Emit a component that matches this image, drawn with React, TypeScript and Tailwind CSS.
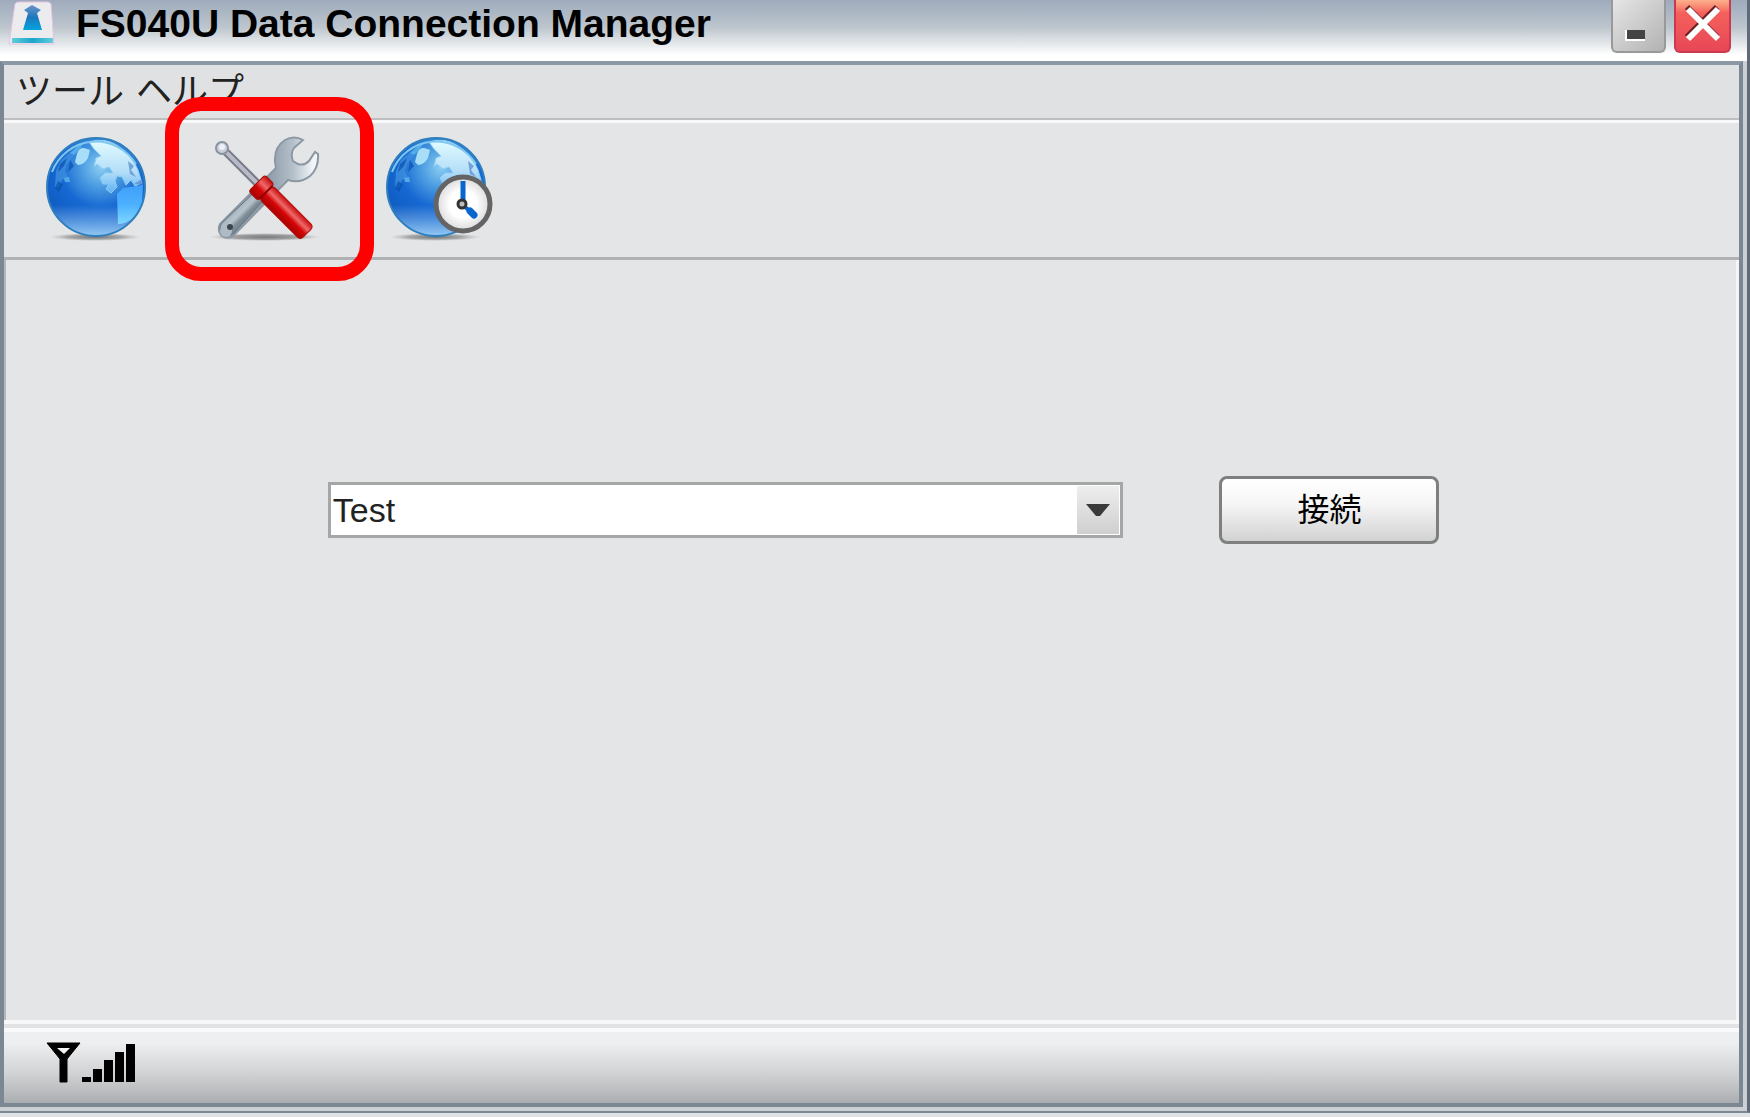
import React from "react";

function GlobeBase({ id }: { id: string }) {
  return (
    <>
      <defs>
        <radialGradient id={`${id}-sea`} cx="0.55" cy="0.3" r="0.75">
          <stop offset="0" stopColor="#8ccdf2" />
          <stop offset="0.25" stopColor="#4f9fe2" />
          <stop offset="0.55" stopColor="#1668d2" />
          <stop offset="1" stopColor="#0b57bd" />
        </radialGradient>
        <linearGradient id={`${id}-glow`} x1="0" y1="0" x2="0" y2="1">
          <stop offset="0.68" stopColor="#9cc8f5" stopOpacity="0" />
          <stop offset="1" stopColor="#9cd0f8" stopOpacity="0.95" />
        </linearGradient>
        <linearGradient id={`${id}-land`} x1="0" y1="0" x2="0" y2="1">
          <stop offset="0" stopColor="#e2fbff" />
          <stop offset="0.6" stopColor="#b4def8" />
          <stop offset="1" stopColor="#5db2f5" />
        </linearGradient>
        <linearGradient id={`${id}-south`} x1="0" y1="0" x2="0" y2="1">
          <stop offset="0" stopColor="#3f9ffa" />
          <stop offset="0.5" stopColor="#4cb0ff" />
          <stop offset="1" stopColor="#80d8ff" />
        </linearGradient>
        <radialGradient id={`${id}-shadow`}>
          <stop offset="0" stopColor="#6d6f71" />
          <stop offset="0.6" stopColor="#8d8f91" stopOpacity="0.7" />
          <stop offset="1" stopColor="#b0b2b4" stopOpacity="0" />
        </radialGradient>
      </defs>
      <ellipse cx="59" cy="107" rx="46" ry="4" fill={`url(#${id}-shadow)`} />
      <circle cx="60" cy="57" r="49" fill={`url(#${id}-sea)`} />
      <circle cx="60" cy="57" r="49" fill={`url(#${id}-glow)`} />
      <path
        d="M53 12 Q69 7 82 16 Q96 25 102 40 L106 53 L99 56 L95 50 L90 55 L86 47 L81 46 L79 51 L81 57 L75 63 L70 59 L73 54 L67 54 L64 48 L69 43 L77 43 L73 37 L67 39 L61 34 L58 37 L60 28 L65 26 L58 19 Z"
        fill={`url(#${id}-land)`}
        stroke="#8fcdf3"
        strokeWidth="1"
        strokeLinejoin="round"
      />
      <path d="M41 24 Q43 17 48 18 L54 20 L52 28 Q48 35 42 35 L39 32 Z" fill="#a8def8" />
      <path d="M20 41 L25 30 L35 22 L38 26 L31 34 L29 41 L32 47 L26 50 L23 58 L19 57 Z" fill="#3c8fdd" opacity="0.8" />
      <path d="M28 48 L33 47 L34 52 L29 52 Z M34 23 L42 16 L47 14 L44 19 L38 25 Z" fill="#5bb4ea" opacity="0.85" />
      <path d="M24 34 L31 28 L28 36 L22 42 Z M22 51 L27 54 L23 62 L19 58 Z M34 30 L38 36 L32 42 Z" fill="#0950ae" opacity="0.7" />
      <path d="M92 31 L98 36 L95 40 L100 47 L94 44 Z M98 54 L106 49 L107 55 Z" fill="#5687cb" opacity="0.7" />
      <path d="M81 64 L87 58 L107 55 L106 73 Q103 82 96 89 Q89 94 82 94 Z" fill={`url(#${id}-south)`} />
      <circle cx="60" cy="57" r="49" fill="none" stroke="#2f7fbe" strokeWidth="2" />
      <path d="M16 42 A47 47 0 0 1 100 34" fill="none" stroke="#7fc7ee" strokeWidth="2" />
    </>
  );
}

function GlobeIcon() {
  return (
    <svg viewBox="0 0 120 120" className="size-[120px]" aria-hidden>
      <GlobeBase id="globe" />
    </svg>
  );
}

function GlobeClockIcon() {
  return (
    <svg viewBox="0 0 120 120" className="size-[120px]" aria-hidden>
      <defs>
        <radialGradient id="clock-face">
          <stop offset="0.5" stopColor="#ffffff" />
          <stop offset="1" stopColor="#d9d9d9" />
        </radialGradient>
      </defs>
      <GlobeBase id="history" />
      <circle cx="87" cy="74" r="27" fill="url(#clock-face)" stroke="#646464" strokeWidth="5" />
      <path d="M87 72 V51" stroke="#0a66cf" strokeWidth="5" />
      <path d="M89 77 L94 81" stroke="#0a66cf" strokeWidth="4" />
      <path d="M94 81 L98 85" stroke="#0a66cf" strokeWidth="7" strokeLinecap="round" />
      <circle cx="86" cy="74" r="4" fill="#bdbdbd" stroke="#333" strokeWidth="3" />
    </svg>
  );
}

function ToolsIcon() {
  return (
    <svg viewBox="0 0 120 120" className="size-[120px]" aria-hidden>
      <defs>
        <radialGradient id="tools-shadow">
          <stop offset="0" stopColor="#77797b" />
          <stop offset="0.6" stopColor="#8d8f91" stopOpacity="0.8" />
          <stop offset="1" stopColor="#b0b2b4" stopOpacity="0" />
        </radialGradient>
        <linearGradient id="tools-steel" x1="0" y1="0" x2="1" y2="1">
          <stop offset="0.2" stopColor="#8796a1" />
          <stop offset="0.48" stopColor="#b7c3cc" />
          <stop offset="0.55" stopColor="#7c8b95" />
          <stop offset="0.8" stopColor="#66747e" />
        </linearGradient>
        <linearGradient id="tools-head" x1="0" y1="0" x2="1" y2="0">
          <stop offset="0.5" stopColor="#8e9dab" />
          <stop offset="0.75" stopColor="#b4c0ca" />
          <stop offset="0.95" stopColor="#f2f6f9" />
        </linearGradient>
        <linearGradient id="tools-grip" x1="0" y1="0" x2="0" y2="1">
          <stop offset="0" stopColor="#c90c0c" />
          <stop offset="0.35" stopColor="#ee6a6a" />
          <stop offset="0.6" stopColor="#d40606" />
          <stop offset="1" stopColor="#a80000" />
        </linearGradient>
      </defs>
      <ellipse cx="59" cy="107" rx="56" ry="4" fill="url(#tools-shadow)" />
      {/* wrench */}
      <path
        d="M97 10 Q88 5 79 10 Q68 17 69 32 L70 38 L14 94 Q11 101 16 106 Q22 110 28 105 L82 50 Q94 54 104 46 Q113 38 112 24 L109 22 L103 31 Q98 36 92 34 L87 31 Q84 23 88 18 Z"
        fill="url(#tools-head)"
        stroke="#8b98a3"
        strokeWidth="2"
      />
      <path d="M56 55 L65 62 L28 103 Q21 108 16 103 Q12 98 16 93 Z" fill="url(#tools-steel)" stroke="#66747e" strokeWidth="1" />
      <circle cx="20" cy="101" r="6" fill="#aebbc4" />
      <circle cx="24" cy="97" r="3" fill="#3e464c" />
      {/* screwdriver */}
      <path d="M18 20 L54 56" stroke="#777b89" strokeWidth="8" />
      <path d="M18 20 L54 56" stroke="#b9bcc8" strokeWidth="4" />
      <circle cx="16" cy="18" r="6" fill="#c8d0dc" stroke="#8b93a0" strokeWidth="2" />
      <circle cx="16" cy="17" r="3" fill="#eef2f8" />
      <g transform="rotate(45 54 57)">
        <rect x="62" y="47" width="58" height="19" rx="4" fill="url(#tools-grip)" stroke="#b51010" />
        <rect x="49" y="45" width="13" height="23" rx="3" fill="url(#tools-grip)" stroke="#a80a0a" />
        <path d="M62 47 V66" stroke="#8f0000" strokeWidth="2" />
      </g>
    </svg>
  );
}

function AppIcon() {
  return (
    <svg viewBox="0 0 48 48" className="size-12" aria-hidden>
      <defs>
        <linearGradient id="app-arrow" x1="0" y1="0" x2="0" y2="1">
          <stop offset="0" stopColor="#6b93c8" />
          <stop offset="0.5" stopColor="#1c79bd" />
          <stop offset="1" stopColor="#04a5df" />
        </linearGradient>
        <linearGradient id="app-strip">
          <stop offset="0" stopColor="#62cdda" />
          <stop offset="0.5" stopColor="#1ba5cb" />
          <stop offset="1" stopColor="#62cdda" />
        </linearGradient>
      </defs>
      <path d="M7 4 Q8 2 11 2 H39 Q42 2 43 4 L46 44 H1 Z" fill="#ececee" stroke="#e3c3e6" strokeWidth="1" />
      <path d="M4 38 H45 V43 H4 Z" fill="url(#app-strip)" />
      <path d="M24 5 L33 10 L29 13 L34 30 H15 L20 13 L16 10 Z" fill="url(#app-arrow)" />
    </svg>
  );
}

function SignalIcon() {
  return (
    <svg viewBox="0 0 96 44" className="h-11 w-24" role="img" aria-label="Signal strength">
      <path d="M3 3 H36 L23 19 V42 H16 V19 Z" stroke="#000" strokeLinejoin="round" />
      <path d="M13 8 H26 L20 14 Z" fill="#f4f4f4" />
      <path d="M38 37h9v5h-9z M49 29h9v13h-9z M60 20h9v22h-9z M71 12h9v30h-9z M82 4h9v38h-9z" />
    </svg>
  );
}

export default function App() {
  return (
    <div className="flex min-h-screen flex-col bg-[#dfe2e5] pb-1 font-['Liberation_Sans','Noto_Sans_CJK_JP',sans-serif] text-[#111]">
      <div className="flex flex-1 flex-col border-r-3 border-b-2 border-r-[#5f6b79] border-b-[#7b8792] bg-[#ccd0d3]">
        {/* title bar */}
        <header className="flex h-[61px] items-start bg-linear-to-b from-[#9fabbd] via-[#bdc6cd] via-45% to-white to-90% pr-4 pl-2">
          <AppIcon />
          <h1 className="ml-5 flex-1 text-[39px] leading-12 font-bold text-black">
            FS040U Data Connection Manager
          </h1>
          <div className="flex gap-2">
            <button
              type="button"
              aria-label="Minimize"
              className="flex h-[53px] w-[55px] items-end rounded-b-md border-x-2 border-b-2 border-[#999] bg-linear-to-br from-[#e6e6e6] to-[#b2b2b2] pb-[10px] pl-3"
            >
              <span className="h-[11px] w-5 border-b-2 border-l-2 border-white bg-[#444]" />
            </button>
            <button
              type="button"
              aria-label="Close"
              className="flex h-[53px] w-[57px] justify-center rounded-b-md border-x-2 border-b-2 border-[#c93a50] bg-linear-to-b from-[#fbb08c] via-[#f4605c] via-25% to-[#e84656] pt-1"
            >
              <svg viewBox="0 0 40 40" className="size-10" aria-hidden>
                <path d="M4 3 L34 33 M34 3 L4 33" stroke="#6b2226" strokeWidth="6" />
                <path d="M5 5 L35 35 M35 5 L5 35" stroke="#fff" strokeWidth="6" />
              </svg>
            </button>
          </div>
        </header>

        <div className="mr-1 mb-1 flex flex-1 flex-col border-4 border-[#7b8792] border-t-[#8c98a5] bg-[#e4e5e7]">
          <nav className="flex h-[55px] items-center gap-3 border-b-2 border-[#bfbfbf] bg-[#e0e1e3] pl-3 text-[36px] leading-10 text-[#222]">
            <button type="button">ツール</button>
            <button type="button">ヘルプ</button>
          </nav>

          <div className="flex gap-[50px] border-t-3 border-b-3 border-t-[#f8f8f8] border-b-[#b0b1b2] py-[7px] pl-8">
            <button type="button" aria-label="Connection">
              <GlobeIcon />
            </button>
            <button type="button" aria-label="Settings" className="relative">
              <ToolsIcon />
              <span className="pointer-events-none absolute -top-[33px] -left-[41px] h-[184px] w-[209px] rounded-[36px] border-14 border-[#ff0000]" />
            </button>
            <button type="button" aria-label="History">
              <GlobeClockIcon />
            </button>
          </div>

          <main className="flex-1 border-r-3 border-l-2 border-r-[#f5f5f5] border-l-[#b5b7b9] pt-[216px]">
            <form className="flex items-center gap-24 pl-[18.6%]">
              <div className="relative h-14 w-[56.5%]">
                <select
                  aria-label="Profile"
                  className="h-full w-full appearance-none border-3 border-[#a5a6a6] bg-white pl-[2px] text-[34px] leading-10 text-[#222]"
                >
                  <option>Test</option>
                </select>
                <span className="pointer-events-none absolute inset-y-1 right-1 flex w-[42px] items-center justify-center bg-linear-to-b from-[#eee] to-[#cfcfcf]">
                  <svg viewBox="0 0 24 12" className="h-3 w-6" aria-hidden>
                    <path d="M0 0 H24 L14 12 H10 Z" fill="#3a3a3a" />
                  </svg>
                </span>
              </div>
              <button
                type="button"
                className="h-[68px] w-[220px] shrink-0 rounded-lg border-3 border-[#7e7f7f] bg-linear-to-b from-white via-[#f6f6f6] via-40% to-[#d2d2d2] text-[32px] leading-10 text-black"
              >
                接続
              </button>
            </form>
          </main>

          <div className="h-2 border-t-4 border-[#f8f8f8] bg-[#e2e3e4]" />
          <footer className="flex h-[75px] items-start border-t-4 border-[#fafafa] bg-linear-to-b from-[#eeeff0] from-15% via-[#d0d1d3] via-60% to-[#abaeb1] pt-2 pl-10">
            <SignalIcon />
          </footer>
        </div>
      </div>
    </div>
  );
}
